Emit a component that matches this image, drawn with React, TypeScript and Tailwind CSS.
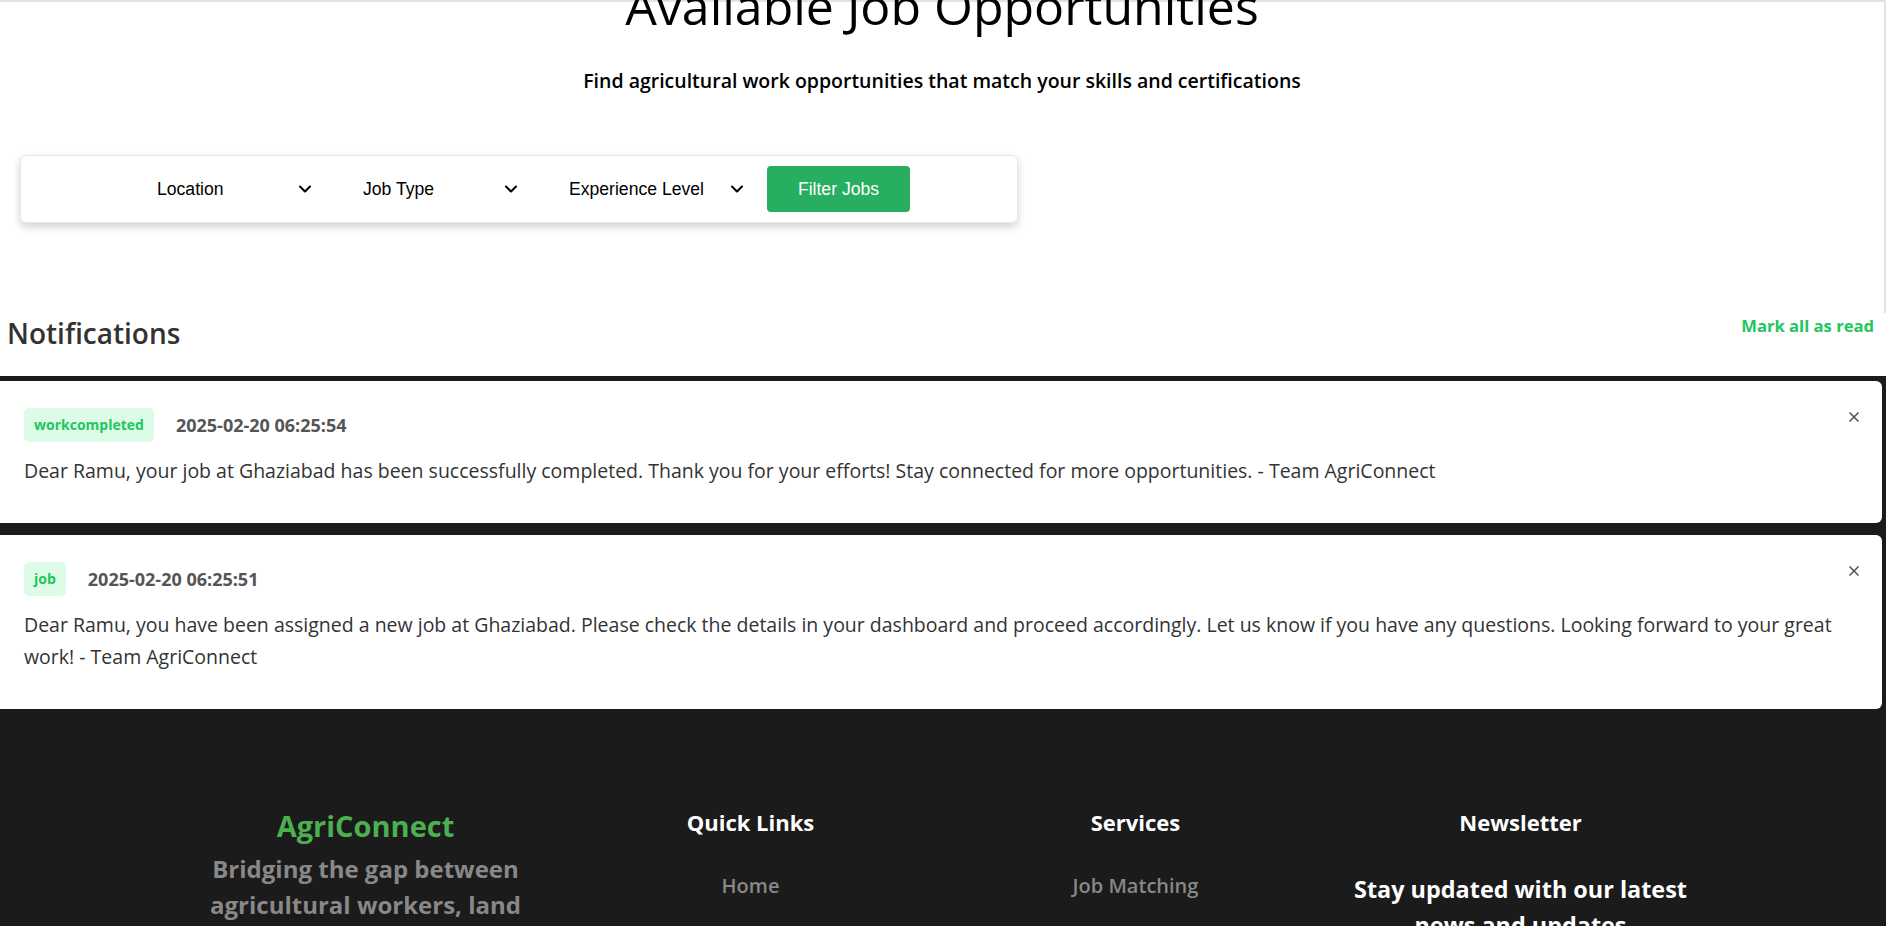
import { ChevronDown, X } from 'lucide-react';

const sans = { fontFamily: '"Open Sans", "Noto Sans", sans-serif' };

type Note = {
  id: number;
  type: string;
  time: string;
  message: string;
};

const notes: Note[] = [
  {
    id: 1,
    type: 'workcompleted',
    time: '2025-02-20 06:25:54',
    message:
      'Dear Ramu, your job at Ghaziabad has been successfully completed. Thank you for your efforts! Stay connected for more opportunities. - Team AgriConnect',
  },
  {
    id: 2,
    type: 'job',
    time: '2025-02-20 06:25:51',
    message:
      'Dear Ramu, you have been assigned a new job at Ghaziabad. Please check the details in your dashboard and proceed accordingly. Let us know if you have any questions. Looking forward to your great work! - Team AgriConnect',
  },
];

function FilterSelect({ label, width }: { label: string; width: string }) {
  return (
    <div className={`flex items-center justify-between px-3 ${width}`}>
      <span>{label}</span>
      <ChevronDown size={20} strokeWidth={2.5} className="text-black" />
    </div>
  );
}

export default function App() {
  return (
    <div className="min-h-screen w-full overflow-hidden bg-[#1b1b1b]" style={sans}>
      {/* Jobs header + filters */}
      <section className="bg-white border-t-2 border-r-2 border-[#e2e2e2] pb-[90px]">
        <h1 className="mt-[-26px] text-center text-[50px] leading-[60px] text-black">
          Available Job Opportunities
        </h1>
        <p className="mt-[30px] text-center text-[19.5px] leading-[29px] font-semibold text-black">
          Find agricultural work opportunities that match your skills and certifications
        </p>

        <div
          className="ml-[20px] mt-[60px] flex w-[998px] items-center rounded-md border border-gray-200 bg-white py-[10px] pl-[124px] shadow-[0_4px_8px_rgba(0,0,0,0.18)] text-[17.6px] text-black"
          style={{ fontFamily: '"Liberation Sans", Arial, sans-serif' }}
        >
          <div className="flex items-center gap-6">
            <FilterSelect label="Location" width="w-[182px]" />
            <FilterSelect label="Job Type" width="w-[182px]" />
            <FilterSelect label="Experience Level" width="w-[202px]" />
          </div>
          <button className="ml-2 h-[46px] w-[143px] rounded-[4px] bg-[#27ae60] text-white">
            Filter Jobs
          </button>
        </div>
      </section>

      {/* Notifications */}
      <section>
        <div className="flex items-start justify-between bg-white pl-[7px] pr-[12px] pb-[23px]">
          <h2 className="text-[28px] leading-[40px] font-semibold text-[#333]">Notifications</h2>
          <button className="mt-[1px] text-[16.6px] font-bold text-[#22c55e]">Mark all as read</button>
        </div>

        <div className="flex flex-col gap-3 pt-[5px] pr-[4px]">
          {notes.map((n) => (
            <div key={n.id} className="relative rounded-r-md bg-white pl-6 pr-[44px] pt-[27px] pb-[36px]">
              <div className="mb-[13px] flex items-center gap-[22px]">
                <span className="rounded-[5px] bg-[#dcfce7] px-[10px] py-[7px] text-[14px] leading-[20px] font-bold text-[#22c55e]">
                  {n.type}
                </span>
                <span className="text-[18px] font-bold text-[#555]">{n.time}</span>
              </div>
              <p className="text-[19.5px] leading-[32px] text-[#333]">{n.message}</p>
              <button className="absolute right-5 top-[28px] text-[#555]">
                <X size={16} strokeWidth={2.5} />
              </button>
            </div>
          ))}
        </div>
      </section>

      {/* Footer */}
      <footer className="bg-[#1b1b1b] pt-[100px] pb-16">
        <div className="mx-auto grid w-[1500px] grid-cols-4 gap-10 text-center">
          <div>
            <h3 className="text-[29px] leading-[34px] font-bold text-[#4caf50]">AgriConnect</h3>
            <p className="mt-2 text-[24px] leading-[36px] font-bold text-[#888]">
              Bridging the gap between agricultural workers, land owners and service providers.
            </p>
          </div>
          <div>
            <h3 className="text-[22px] leading-[26px] font-bold text-white">Quick Links</h3>
            <ul className="mt-[37px] space-y-6 text-[20px] leading-[28px] font-semibold text-[#888]">
              <li>Home</li>
              <li>Find Jobs</li>
              <li>About Us</li>
            </ul>
          </div>
          <div>
            <h3 className="text-[22px] leading-[26px] font-bold text-white">Services</h3>
            <ul className="mt-[37px] space-y-6 text-[20px] leading-[28px] font-semibold text-[#888]">
              <li>Job Matching</li>
              <li>Certification</li>
              <li>Training</li>
            </ul>
          </div>
          <div>
            <h3 className="text-[22px] leading-[26px] font-bold text-white">Newsletter</h3>
            <p className="mt-[36px] text-[23.4px] leading-[36px] font-bold text-white">
              Stay updated with our latest news and updates
            </p>
          </div>
        </div>
      </footer>
    </div>
  );
}
